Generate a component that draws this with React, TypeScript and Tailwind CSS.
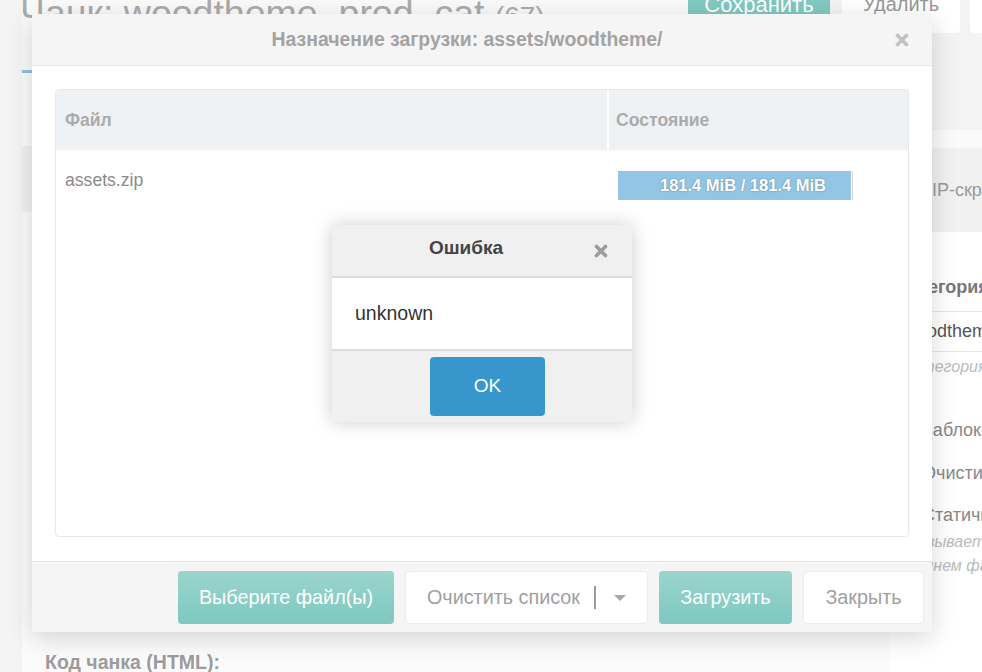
import type { ReactNode } from "react"

// Heavy "×" used in both dialog headers.
function CloseIcon({ className }: { className?: string }) {
  return (
    <svg viewBox="0 0 14 14" className={className} fill="none" aria-hidden>
      <path
        d="M2.5 2.5 L11.5 11.5 M11.5 2.5 L2.5 11.5"
        stroke="currentColor"
        strokeWidth="3.6"
        strokeLinecap="round"
      />
    </svg>
  )
}

function TealButton({ children, className = "" }: { children: ReactNode; className?: string }) {
  return (
    <button
      type="button"
      className={`flex h-[53px] items-center justify-center rounded-[4px] bg-gradient-to-b from-[#9ad5cc] to-[#7ec8c1] text-[19.8px] text-white ${className}`}
    >
      {children}
    </button>
  )
}

function PlainButton({ children, className = "" }: { children: ReactNode; className?: string }) {
  return (
    <button
      type="button"
      className={`flex h-[53px] items-center justify-center rounded-[4px] border border-[#ececec] bg-white text-[19.8px] text-[#9f9f9f] ${className}`}
    >
      {children}
    </button>
  )
}

/* Chunk editor page that sits behind the upload dialog */
function ChunkPage() {
  return (
    <div className="flex h-full">
      <aside className="w-[22px] shrink-0 bg-[#f4f4f4]" />

      <main className="flex min-w-0 flex-1 flex-col">
        <header className="flex h-[70px] shrink-0">
          <div className="w-[666px] shrink-0 bg-[#fafafa]">
            <h1 className="-ml-[2px] -mt-[8px] whitespace-nowrap text-[37.5px] font-normal leading-[42px] text-[#ababab]">
              Чанк: woodtheme_prod_cat <span className="text-[28px]">(67)</span>
            </h1>
          </div>
          <div className="flex flex-1 items-start gap-[12px] bg-[#f3f3f3]">
            <button type="button" className="-mt-[21px] flex h-[50px] w-[142px] shrink-0 items-center justify-center rounded-[4px] bg-[#80c9c1] text-[22px] text-white">
              Сохранить
            </button>
            <button type="button" className="-mt-[17px] flex h-[50px] w-[118px] shrink-0 items-center justify-center rounded-[4px] bg-white pb-[8px] text-[20px] text-[#999]">
              Удалить
            </button>
            <button type="button" className="-ml-[2px] -mt-[17px] flex h-[50px] w-[120px] shrink-0 items-center justify-center rounded-[4px] bg-white pb-[8px] text-[20px] text-[#999]">
              Отмена
            </button>
          </div>
        </header>

        {/* tab strip */}
        <div className="flex h-[3px] shrink-0 bg-[#f3f3f3]">
          <div className="w-[120px] bg-[#8fc4e0]" />
        </div>

        <div className="flex min-h-0 flex-1">
          {/* left: chunk fields */}
          <section className="flex w-[868px] shrink-0 flex-col bg-[#fbfbfb]">
            <div className="mt-[73px] h-[66px] bg-[#f1f1f1]" />
            <div className="flex-1" />
            <label className="-mb-[2px] pl-[23px] text-[19.5px] font-bold leading-[23px] text-[#9c9c9c]">
              Код чанка (HTML):
            </label>
          </section>

          {/* right: properties column */}
          <section className="flex min-w-0 flex-1 flex-col whitespace-nowrap bg-white">
            <div className="h-[57px] bg-[#f3f3f3]" />
            <div className="h-[18px] bg-[#fafafa]" />
            <div className="flex h-[84px] items-center bg-[#f1f1f1] pl-[31px] text-[18px] text-[#9a9a9a]">
              ZIP-скрипт
            </div>
            <div className="mt-[45px] pl-[8px] text-[18px] font-bold leading-[21px] text-[#777]">
              Категория
            </div>
            <div className="mt-[13px] flex h-[41px] items-center border-y border-[#e6e6e6] pl-[14px] text-[18px] text-[#555]">
              woodtheme
            </div>
            <div className="mt-[6px] pl-[13px] text-[16px] italic leading-[18px] text-[#bbb]">
              Категория чанка
            </div>
            <div className="mt-[44px] pl-[32px] text-[18px] leading-[21px] text-[#888]">Заблокировать</div>
            <div className="mt-[22px] pl-[32px] text-[18px] leading-[21px] text-[#888]">Очистить кэш</div>
            <div className="mt-[21px] pl-[32px] text-[18px] leading-[21px] text-[#888]">Статичный</div>
            <div className="mt-[4px] pl-[11px] text-[16px] italic leading-[24px] text-[#bbb]">Указывает, что чанк</div>
            <div className="pl-[4px] text-[16px] italic leading-[24px] text-[#bbb]">внешнем файле</div>
          </section>
        </div>
      </main>
    </div>
  )
}

function UploadDialog() {
  return (
    <div className="absolute left-[32px] top-[14px] flex h-[618px] w-[900px] flex-col bg-white shadow-[0_6px_24px_rgba(0,0,0,0.16)]">
      <div className="relative flex h-[52px] shrink-0 items-center justify-center border-b border-[#e6e6e6] bg-[#f5f5f5] pr-[30px]">
        <h2 className="text-[19.4px] font-bold text-[#a3a3a3]">Назначение загрузки: assets/woodtheme/</h2>
        <CloseIcon className="absolute right-[23px] top-[19px] h-[14px] w-[14px] text-[#c2c2c2]" />
      </div>

      <div className="flex-1 p-[23px]">
        <div className="flex h-[448px] flex-col rounded-[4px] border border-[#e8e8e8]">
          <div className="flex h-[60px] shrink-0 items-center rounded-t-[4px] bg-[#eef2f5] text-[17.6px] font-bold text-[#ababab]">
            <div className="w-[551px] pl-[9px]">Файл</div>
            <div className="h-full w-[2px] bg-white" />
            <div className="flex-1 pl-[7px]">Состояние</div>
          </div>
          <div className="flex">
            <div className="w-[553px] pl-[9px] pt-[20px] text-[17.6px] leading-[21px] text-[#8a8a8a]">assets.zip</div>
            <div className="flex-1 pl-[9px] pt-[21px]">
              <div className="relative flex h-[29px] w-[250px]">
                <div className="w-[233px] bg-[#93c6e4]" />
                <div className="ml-[1px] w-[1px] bg-[#d4d4d4]" />
                <span className="absolute inset-0 flex items-center justify-center text-[16.5px] font-bold text-white [text-shadow:0_0_2px_rgba(0,0,0,0.35)]">
                  181.4 MiB / 181.4 MiB
                </span>
              </div>
            </div>
          </div>
        </div>
      </div>

      <div className="flex h-[71px] shrink-0 justify-end gap-[11px] border-t border-[#e6e6e6] bg-[#f5f5f5] pr-[8px] pt-[9px]">
        <TealButton className="w-[216px]">Выберите файл(ы)</TealButton>
        <PlainButton className="w-[243px]">
          <span>Очистить список</span>
          <span className="ml-[14px] h-[23px] w-[2px] bg-[#9a9a9a]" />
          <span className="ml-[18px] h-0 w-0 border-x-[6px] border-t-[6px] border-x-transparent border-t-[#a5a5a5]" />
        </PlainButton>
        <TealButton className="w-[133px]">Загрузить</TealButton>
        <PlainButton className="w-[121px]">Закрыть</PlainButton>
      </div>
    </div>
  )
}

function ErrorDialog() {
  return (
    <div className="absolute left-[332px] top-[225px] flex w-[300px] flex-col bg-white shadow-[0_0_18px_rgba(0,0,0,0.2)]">
      <div className="relative flex h-[53px] items-center justify-center border-b-2 border-[#dcdcdc] bg-[#f0f0f0] pb-[4px] pr-[32px]">
        <h3 className="text-[19px] font-bold text-[#444]">Ошибка</h3>
        <CloseIcon className="absolute right-[24px] top-[19px] h-[14px] w-[14px] text-[#9c9c9c]" />
      </div>
      <div className="flex h-[73px] items-center border-b-2 border-[#dcdcdc] pl-[23px] text-[19.5px] text-[#333]">
        unknown
      </div>
      <div className="flex h-[71px] items-center justify-center bg-[#f0f0f0] pl-[11px]">
        <button type="button" className="h-[59px] w-[115px] rounded-[4px] bg-[#3797cd] text-[19px] text-white">
          OK
        </button>
      </div>
    </div>
  )
}

export default function App() {
  return (
    <div className="relative h-[672px] w-[982px] overflow-hidden bg-white font-['Liberation_Sans',Arial,sans-serif]">
      <ChunkPage />
      <UploadDialog />
      <ErrorDialog />
    </div>
  )
}
